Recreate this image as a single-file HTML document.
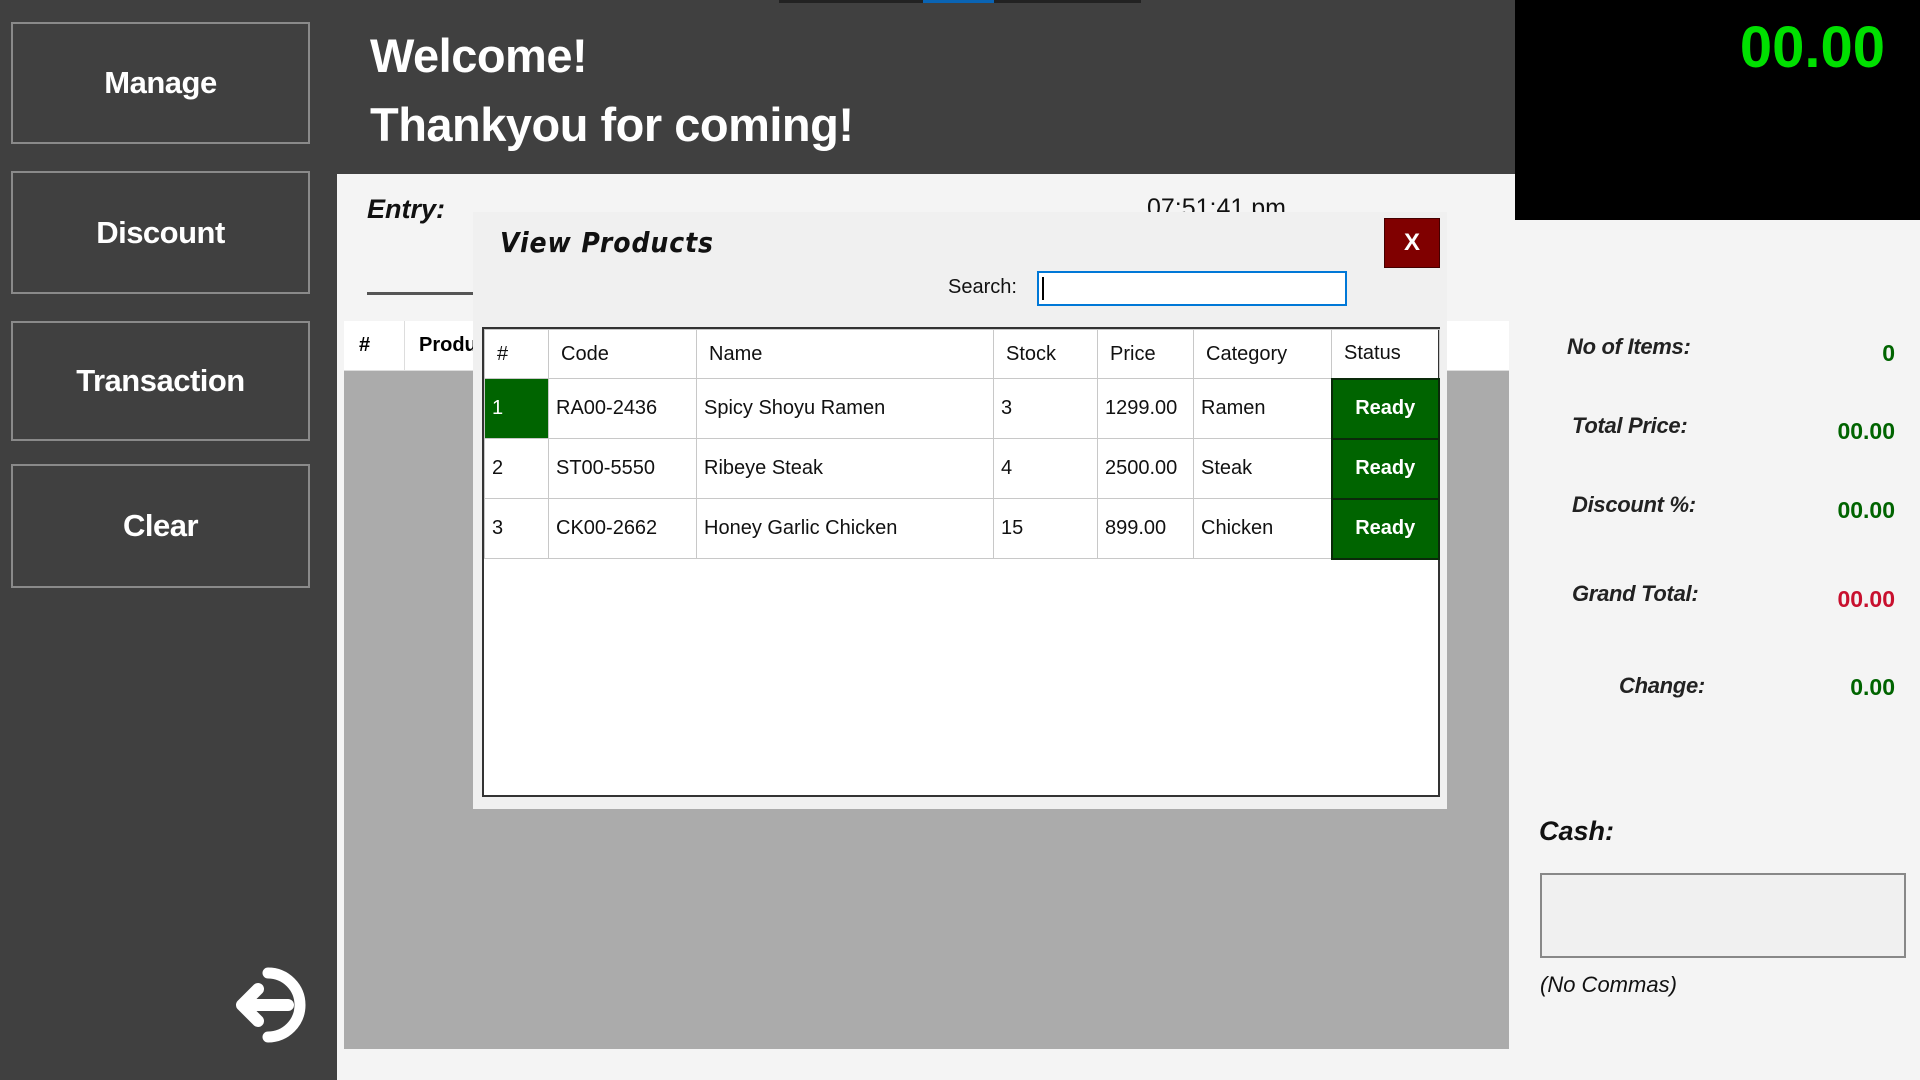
<!DOCTYPE html>
<html><head><meta charset="utf-8"><style>
*{margin:0;padding:0;box-sizing:border-box}
body{width:1920px;height:1080px;overflow:hidden;position:relative;background:#f4f4f4;font-family:"Liberation Sans",sans-serif}
.a{position:absolute}
.side{left:0;top:0;width:337px;height:1080px;background:#404040}
.btn{position:absolute;left:11px;width:299px;border:2px solid #8a8a8a;color:#fff;font-weight:bold;font-size:31px;display:flex;align-items:center;justify-content:center;letter-spacing:-0.5px}
.hdr{left:337px;top:0;width:1178px;height:174px;background:#404040}
.wel{color:#fff;font-weight:bold;font-size:47px;letter-spacing:-0.5px;left:370px}
.blk{left:1515px;top:0;width:405px;height:220px;background:#000}
table{border-collapse:collapse;font-size:20px}
td{border:1px solid #c8c8c8;height:60px;padding-left:7px;color:#111}
.th td{height:49px;padding-left:12px}
.rdy{background:#006400;color:#fff;font-weight:bold;text-align:center;padding:0;border:2px solid #0a2a0a}
.lab{font-style:italic;font-weight:bold;font-size:22px;color:#222;letter-spacing:-0.3px}
.val{font-weight:bold;font-size:23px;color:#006400;right:25px;text-align:right}
</style></head><body>
<div class="a side"></div>
<div class="btn" style="top:22px;height:122px">Manage</div>
<div class="btn" style="top:171px;height:123px">Discount</div>
<div class="btn" style="top:321px;height:120px">Transaction</div>
<div class="btn" style="top:464px;height:124px">Clear</div>
<svg class="a" style="left:232px;top:965px" width="84" height="80" viewBox="0 0 84 80">
<path d="M36 8 A30 30 0 1 1 36 72" fill="none" stroke="#fff" stroke-width="11" stroke-linecap="round"/>
<path d="M56 40 H12 M26 24 L10 40 L26 56" fill="none" stroke="#fff" stroke-width="12" stroke-linecap="round" stroke-linejoin="round"/>
</svg>
<div class="a hdr"></div>
<div class="a" style="left:779px;top:0;width:362px;height:3px;background:#222"></div>
<div class="a" style="left:923px;top:0;width:71px;height:3px;background:#0a64b4"></div>
<div class="a wel" style="top:28px">Welcome!</div>
<div class="a wel" style="top:97px">Thankyou for coming!</div>
<div class="a blk"></div>
<div class="a" style="right:35px;top:14px;color:#00e000;font-weight:bold;font-size:58px">00.00</div>
<div class="a" style="left:337px;top:174px;width:1178px;height:906px;background:#f4f4f4"></div>
<div class="a" style="left:367px;top:194px;font-weight:bold;font-style:italic;font-size:27px;color:#111">Entry:</div>
<div class="a" style="left:1147px;top:194px;font-size:25px;color:#111">07:51:41 pm</div>
<div class="a" style="left:367px;top:292px;width:200px;height:3px;background:#555"></div>
<div class="a" style="left:344px;top:321px;width:1165px;height:728px;background:#ababab"></div>
<div class="a" style="left:344px;top:321px;width:1165px;height:50px;background:#fff;border-bottom:1px solid #ddd"></div>
<div class="a" style="left:404px;top:321px;width:1px;height:50px;background:#ddd"></div>
<div class="a" style="left:359px;top:334px;font-weight:bold;font-size:20px">#</div>
<div class="a" style="left:419px;top:334px;font-weight:bold;font-size:20px">Product</div>
<div class="a" style="left:473px;top:212px;width:974px;height:597px;background:#f0f0f0"></div>
<div class="a" style="left:500px;top:226px;font-style:italic;font-weight:bold;font-size:28px;font-family:'DejaVu Sans',sans-serif;letter-spacing:1px;color:#111;transform:scaleX(0.9);transform-origin:left">View Products</div>
<div class="a" style="left:1384px;top:218px;width:56px;height:50px;background:#800000;border:1px solid #400;color:#fff;font-weight:bold;font-size:24px;display:flex;align-items:center;justify-content:center">X</div>
<div class="a" style="left:948px;top:276px;font-size:20px;color:#111">Search:</div>
<div class="a" style="left:1037px;top:271px;width:310px;height:35px;background:#fff;border:2px solid #0078d7"></div>
<div class="a" style="left:1042px;top:277px;width:2px;height:23px;background:#000"></div>
<div class="a" style="left:482px;top:327px;width:958px;height:470px;background:#fff;border:2px solid #333">
<table style="width:956px">
<colgroup><col style="width:64px"><col style="width:148px"><col style="width:297px"><col style="width:104px"><col style="width:96px"><col style="width:138px"><col></colgroup>
<tr class="th"><td>#</td><td>Code</td><td>Name</td><td>Stock</td><td>Price</td><td>Category</td><td>Status</td></tr>
<tr><td style="background:#006400;color:#fff">1</td><td>RA00-2436</td><td>Spicy Shoyu Ramen</td><td>3</td><td>1299.00</td><td>Ramen</td><td class="rdy">Ready</td></tr>
<tr><td>2</td><td>ST00-5550</td><td>Ribeye Steak</td><td>4</td><td>2500.00</td><td>Steak</td><td class="rdy">Ready</td></tr>
<tr><td>3</td><td>CK00-2662</td><td>Honey Garlic Chicken</td><td>15</td><td>899.00</td><td>Chicken</td><td class="rdy">Ready</td></tr>
</table></div>
<div class="a lab" style="left:1567px;top:334px">No of Items:</div>
<div class="a val" style="top:340px">0</div>
<div class="a lab" style="left:1572px;top:413px">Total Price:</div>
<div class="a val" style="top:418px">00.00</div>
<div class="a lab" style="left:1572px;top:492px">Discount %:</div>
<div class="a val" style="top:497px">00.00</div>
<div class="a lab" style="left:1572px;top:581px">Grand Total:</div>
<div class="a val" style="top:586px;color:#c8102e">00.00</div>
<div class="a lab" style="left:1619px;top:673px">Change:</div>
<div class="a val" style="top:674px">0.00</div>
<div class="a" style="left:1539px;top:816px;font-weight:bold;font-style:italic;font-size:27px;color:#111">Cash:</div>
<div class="a" style="left:1540px;top:873px;width:366px;height:85px;background:#f0f0f0;border:2px solid #888"></div>
<div class="a" style="left:1540px;top:972px;font-style:italic;font-size:22px;color:#111">(No Commas)</div>
</body></html>
